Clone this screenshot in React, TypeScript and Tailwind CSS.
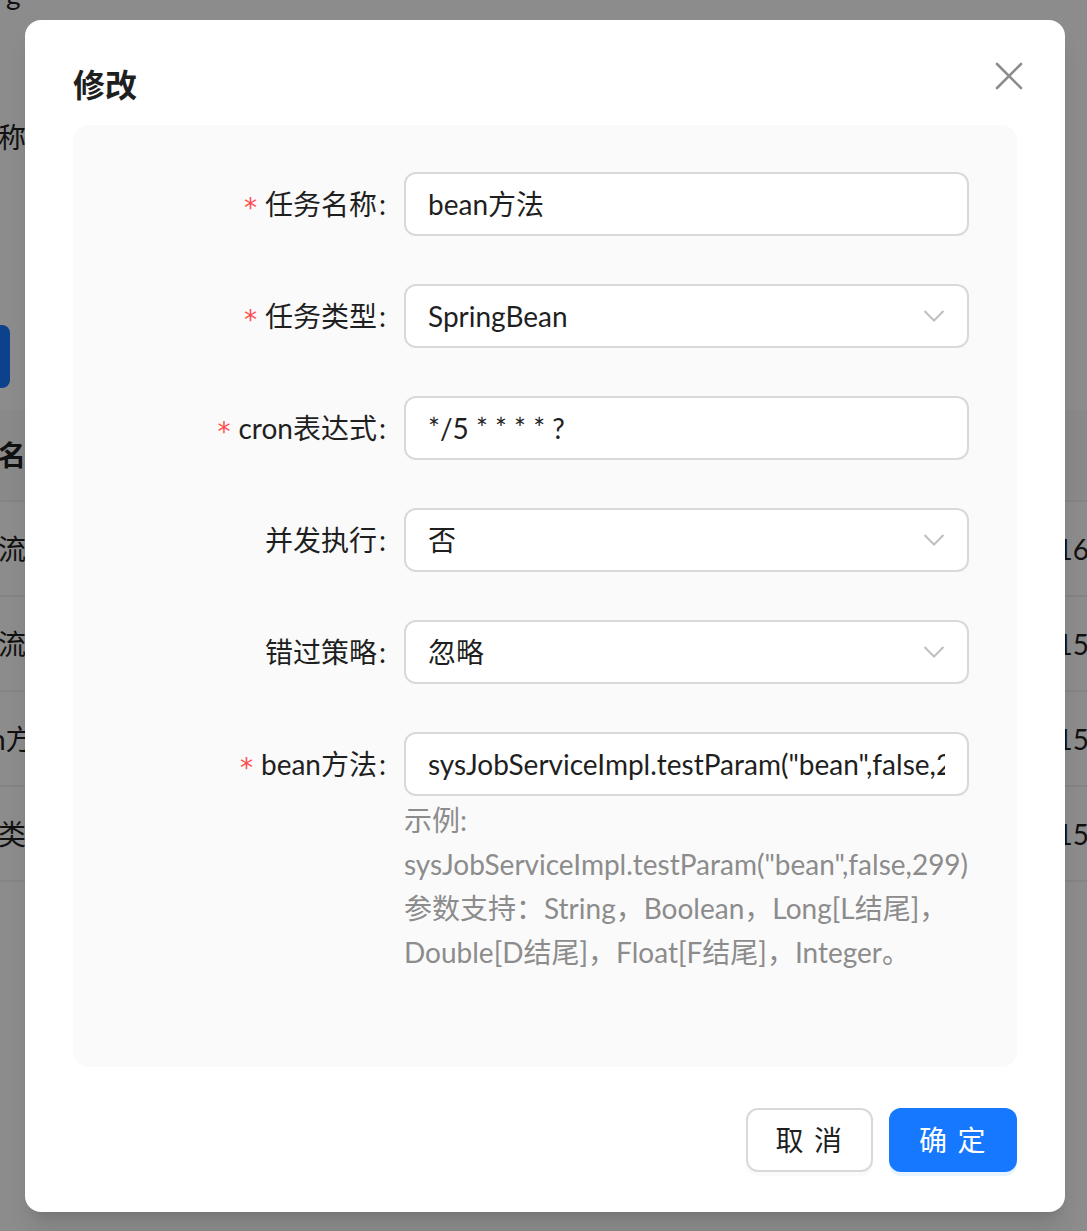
import React from 'react';

const font = { fontFamily: 'Lato, "Noto Sans CJK SC", sans-serif' };

function Chevron() {
  return (
    <svg width="22" height="14" viewBox="0 0 22 14" fill="none" className="shrink-0">
      <path d="M1.5 2 L11 11.5 L20.5 2" stroke="#bfbfbf" strokeWidth="2" />
    </svg>
  );
}

interface FieldProps {
  label: string;
  required?: boolean;
  value: string;
  select?: boolean;
  help?: React.ReactNode;
}

function Field({ label, required, value, select, help }: FieldProps) {
  return (
    <div className="flex items-start">
      <div className="flex h-16 w-[331px] shrink-0 items-center justify-end pr-[18px] text-[28px] text-[#1f1f1f]">
        {required && (
          <span className="mr-2 mt-2 text-[26px] leading-none text-[#ff4d4f]" style={{ fontFamily: '"DejaVu Sans", sans-serif' }}>
            *
          </span>
        )}
        <span>{label}</span>
        <span className="ml-[2px]">:</span>
      </div>
      <div className="flex w-[565px] flex-col">
        <div className="flex h-16 items-center overflow-hidden rounded-xl border-2 border-[#d9d9d9] bg-white pl-[22px] pr-[22px] text-[28px] text-[#1f1f1f]">
          <span className="flex-1 overflow-hidden whitespace-nowrap">{value}</span>
          {select && <Chevron />}
        </div>
        {help && <div className="pt-[2px] text-[28px] leading-[44px] text-[#8c8c8c]">{help}</div>}
      </div>
    </div>
  );
}

export default function App() {
  return (
    <div className="relative h-[1231px] w-[1087px] overflow-hidden bg-white" style={font}>
      {/* page behind the dialog */}
      <div className="flex flex-col text-[28px] text-[#1f1f1f]">
        <div className="-mt-[26px] h-[40px] pl-[6px] leading-[40px]">g</div>
        <div className="mt-[103px] -ml-[2px] leading-[40px]">称</div>
        <div className="mt-[168px] h-[63px] w-[10px] rounded-r-lg bg-[#1677ff]" />
        <div className="mt-[22px] flex h-[92px] items-center border-b-2 border-[#f0f0f0] bg-[#fafafa] font-bold">
          <span className="-ml-[2px]">名</span>
        </div>
        {['流', '流', 'n方', '类'].map((t, i) => (
          <div key={i} className="flex h-[95px] items-center justify-between border-b-2 border-[#f0f0f0]">
            <span className={i === 2 ? '-ml-[10px]' : '-ml-[2px]'}>{t}</span>
            <span className="-mr-[2px]">{i === 0 ? '16' : '15'}</span>
          </div>
        ))}
      </div>

      <div className="absolute inset-0 bg-black/45" />

      <div className="absolute left-[25px] top-[20px] flex w-[1040px] flex-col rounded-2xl bg-white px-12 pb-10 pt-[41px] shadow-xl">
        <div className="flex items-center justify-between">
          <h2 className="text-[32px] font-bold leading-[48px] text-[#1f1f1f]">修改</h2>
          <svg width="28" height="28" viewBox="0 0 28 28" className="-mr-[6px] -mt-[18px]">
            <path d="M2 2 L26 26 M26 2 L2 26" stroke="#8c8c8c" strokeWidth="2.6" strokeLinecap="round" />
          </svg>
        </div>

        <div className="mt-[16px] flex h-[942px] flex-col gap-12 rounded-2xl bg-[#fafafa] pt-[47px]">
          <Field label="任务名称" required value="bean方法" />
          <Field label="任务类型" required value="SpringBean" select />
          <Field label="cron表达式" required value="*/5 * * * * ?" />
          <Field label="并发执行" value="否" select />
          <Field label="错过策略" value="忽略" select />
          <Field
            label="bean方法"
            required
            value={'sysJobServiceImpl.testParam("bean",false,299)'}
            help={
              <>
                <div>示例:</div>
                <div className="whitespace-nowrap">sysJobServiceImpl.testParam("bean",false,299)</div>
                <div>参数支持：String，Boolean，Long[L结尾]，</div>
                <div>Double[D结尾]，Float[F结尾]，Integer。</div>
              </>
            }
          />
        </div>

        <div className="mt-[41px] flex justify-end gap-4">
          <button className="h-16 w-[127px] rounded-xl border-2 border-[#d9d9d9] bg-white text-[28px] tracking-[0.06em] text-[#1f1f1f] shadow-[0_4px_0_rgba(0,0,0,0.02)]">
            取 消
          </button>
          <button className="h-16 w-[128px] rounded-xl bg-[#1677ff] text-[28px] tracking-[0.06em] text-white shadow-[0_4px_0_rgba(5,145,255,0.1)]">
            确 定
          </button>
        </div>
      </div>
    </div>
  );
}
